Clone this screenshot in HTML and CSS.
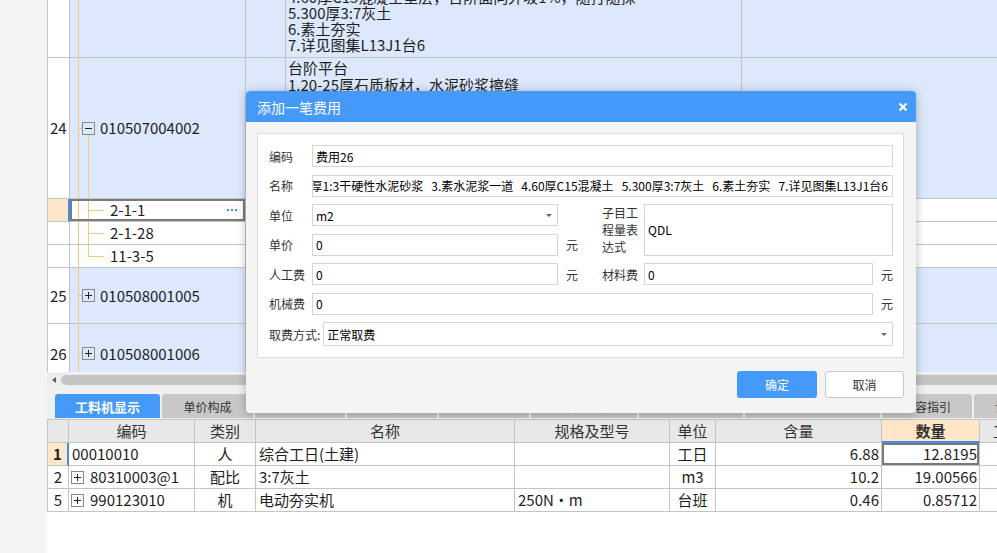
FILE: index.html
```html
<!DOCTYPE html>
<html lang="zh-CN">
<head>
<meta charset="utf-8">
<title>添加一笔费用</title>
<link rel="stylesheet" href="styles.css">
</head>
<body>
<div class="app">
  <div class="side"></div>
  <div class="main">
    <div class="upper">
      <div class="rows">
        <div class="row r-a blue">
          <div class="cell no"></div>
          <div class="cell tree"></div>
          <div class="cell"></div>
          <div class="cell feat">
            <p>3.素水泥浆一道</p>
            <p>4.60厚C15混凝土垫层，台阶面向外坡1%，随打随抹</p>
            <p>5.300厚3:7灰土</p>
            <p>6.素土夯实</p>
            <p>7.详见图集L13J1台6</p>
          </div>
          <div class="cell"></div>
        </div>
        <div class="row r-24 blue">
          <div class="cell no">24</div>
          <div class="cell tree open"><svg class="box" width="13" height="13" viewBox="0 0 13 13"><rect x=".5" y=".5" width="12" height="12" fill="none" stroke="#8a8a8a"/><path d="M3 6.5h7" stroke="#222"/></svg><span class="code">010507004002</span></div>
          <div class="cell"></div>
          <div class="cell feat f24">
            <p>台阶平台</p>
            <p>1.20-25厚石质板材，水泥砂浆擦缝</p>
            <p>2.30厚1:3干硬性水泥砂浆</p>
            <p>3.素水泥浆一道</p>
            <p>4.60厚C15混凝土</p>
            <p>5.300厚3:7灰土</p>
            <p>6.素土夯实</p>
            <p>7.详见图集L13J1台6</p>
          </div>
          <div class="cell"></div>
        </div>
        <div class="row r-s">
          <div class="cell no cur"></div>
          <div class="cell tree child picked"><span class="sub">2-1-1</span><span class="more"><i></i><i></i><i></i></span></div>
          <div class="cell"></div>
          <div class="cell"></div>
          <div class="cell"></div>
        </div>
        <div class="row r-s">
          <div class="cell no"></div>
          <div class="cell tree child"><span class="sub">2-1-28</span></div>
          <div class="cell"></div>
          <div class="cell"></div>
          <div class="cell"></div>
        </div>
        <div class="row r-s">
          <div class="cell no"></div>
          <div class="cell tree child last"><span class="sub">11-3-5</span></div>
          <div class="cell"></div>
          <div class="cell"></div>
          <div class="cell"></div>
        </div>
        <div class="row r-25 blue">
          <div class="cell no">25</div>
          <div class="cell tree closed"><svg class="box" width="13" height="13" viewBox="0 0 13 13"><rect x=".5" y=".5" width="12" height="12" fill="none" stroke="#8a8a8a"/><path d="M3 6.5h7M6.5 3v7" stroke="#222"/></svg><span class="code">010508001005</span></div>
          <div class="cell"></div>
          <div class="cell"></div>
          <div class="cell"></div>
        </div>
        <div class="row r-26 blue">
          <div class="cell no">26</div>
          <div class="cell tree closed"><svg class="box" width="13" height="13" viewBox="0 0 13 13"><rect x=".5" y=".5" width="12" height="12" fill="none" stroke="#8a8a8a"/><path d="M3 6.5h7M6.5 3v7" stroke="#222"/></svg><span class="code">010508001006</span></div>
          <div class="cell"></div>
          <div class="cell"></div>
          <div class="cell"></div>
        </div>
      </div>
    </div>
    <div class="hscroll"><span class="arrow"></span><span class="thumb"></span></div>
    <div class="tabs">
      <span class="tab on w105">工料机显示</span>
      <span class="tab w91">单价构成</span>
      <span class="tab w90">标准换算</span>
      <span class="tab w90">换算信息</span>
      <span class="tab w90">安装费用</span>
      <span class="tab w106">特征及内容</span>
      <span class="tab w104">工程量明细</span>
      <span class="tab w135">反查图形工程量</span>
      <span class="tab w90">内容指引</span>
      <span class="tab w90">说明信息</span>
    </div>
    <div class="lower">
      <div class="rows">
        <div class="row head">
          <div class="cell"></div>
          <div class="cell c">编码</div>
          <div class="cell c">类别</div>
          <div class="cell c">名称</div>
          <div class="cell c">规格及型号</div>
          <div class="cell c">单位</div>
          <div class="cell c">含量</div>
          <div class="cell c qty">数量</div>
          <div class="cell l">工程量</div>
        </div>
        <div class="row">
          <div class="cell no c cur">1</div>
          <div class="cell">00010010</div>
          <div class="cell c">人</div>
          <div class="cell">综合工日(土建)</div>
          <div class="cell"></div>
          <div class="cell c">工日</div>
          <div class="cell r">6.88</div>
          <div class="cell r picked">12.8195</div>
          <div class="cell"></div>
        </div>
        <div class="row">
          <div class="cell no c">2</div>
          <div class="cell"><svg class="box sm" width="13" height="13" viewBox="0 0 13 13"><rect x=".5" y=".5" width="12" height="12" fill="none" stroke="#8a8a8a"/><path d="M3 6.5h7M6.5 3v7" stroke="#222"/></svg>80310003@1</div>
          <div class="cell c">配比</div>
          <div class="cell">3:7灰土</div>
          <div class="cell"></div>
          <div class="cell c">m3</div>
          <div class="cell r">10.2</div>
          <div class="cell r">19.00566</div>
          <div class="cell"></div>
        </div>
        <div class="row">
          <div class="cell no c">5</div>
          <div class="cell"><svg class="box sm" width="13" height="13" viewBox="0 0 13 13"><rect x=".5" y=".5" width="12" height="12" fill="none" stroke="#8a8a8a"/><path d="M3 6.5h7M6.5 3v7" stroke="#222"/></svg>990123010</div>
          <div class="cell c">机</div>
          <div class="cell">电动夯实机</div>
          <div class="cell">250N・m</div>
          <div class="cell c">台班</div>
          <div class="cell r">0.46</div>
          <div class="cell r">0.85712</div>
          <div class="cell"></div>
        </div>
      </div>
    </div>
  </div>
</div>

<div class="dialog">
  <div class="dlg-head">
    <span>添加一笔费用</span>
    <svg class="close" width="10" height="10" viewBox="0 0 10 10"><path d="M1.5 1.5l7 7M8.5 1.5l-7 7" stroke="#fff" stroke-width="2.2"/></svg>
  </div>
  <div class="dlg-body">
    <div class="panel">
      <span class="lb">编码</span>
      <div class="ipt wide">费用26</div>

      <span class="lb">名称</span>
      <div class="ipt wide scrolled"><span>台阶平台 1.20-25厚石质板材，水泥砂浆擦缝   2.30厚1:3干硬性水泥砂浆   3.素水泥浆一道   4.60厚C15混凝土   5.300厚3:7灰土   6.素土夯实   7.详见图集L13J1台6</span></div>

      <span class="lb">单位</span>
      <div class="ipt dd">m2<i class="caret"></i></div>
      <span class="gap"></span>
      <span class="lb multi">子目工程量表达式</span>
      <div class="ipt area">QDL</div>

      <span class="lb">单价</span>
      <div class="ipt">0</div>
      <span class="unit">元</span>

      <span class="lb">人工费</span>
      <div class="ipt">0</div>
      <span class="unit">元</span>
      <span class="lb lb2">材料费</span>
      <div class="ipt">0</div>
      <span class="unit">元</span>

      <span class="lb">机械费</span>
      <div class="ipt mid">0</div>
      <span class="unit">元</span>

      <div class="fee">
        <span class="lb">取费方式:</span>
        <div class="ipt dd tall">正常取费<i class="caret"></i></div>
      </div>
    </div>
    <div class="btns">
      <button class="btn ok">确定</button>
      <button class="btn cancel">取消</button>
    </div>
  </div>
</div>
</body>
</html>
```

FILE: styles.css
```css
* { box-sizing: border-box; margin: 0; padding: 0; }
html, body { width: 997px; height: 553px; overflow: hidden; }
body {
  font-family: "Noto Sans CJK SC", "Noto Sans", sans-serif;
  background: #f4f4f4;
  color: #1e1e1e;
  position: relative;
}
.app { display: flex; height: 553px; }
.side { width: 47px; flex: none; background: #f4f4f4; }
.main {
  flex: 1; min-width: 0; background: #fff;
  display: flex; flex-direction: column; overflow: hidden;
}

/* ---------- grids ---------- */
.rows { border-left: 1px solid #c4c4c4; }
.row { display: grid; height: 23px; }
.cell {
  border-right: 1px solid #c4c4c4;
  border-bottom: 1px solid #c4c4c4;
  font-size: 15px;
  line-height: 22px;
  white-space: nowrap;
  overflow: hidden;
  display: flex;
  align-items: center;
  padding: 0 3px;
  background: #fff;
}

.upper { height: 372px; overflow: hidden; flex: none; }
.upper .rows { margin-top: -29px; }
.upper .row { grid-template-columns: 22px 176px 40px 456px 400px; }
.upper .r-a { height: 87px; }
.upper .r-24 { height: 141px; }
.upper .r-s { height: 23px; }
.upper .r-25 { height: 56px; }
.upper .r-26 { height: 60px; }
.blue > .cell { background-color: #dce8fc; }
.blue > .cell.no { background-color: #fff; }
.upper .no { padding-left: 2px; }
.no.cur { background: #fde7c8; border-right: 2px solid #3d8ef0; }

.feat { display: block; padding: 2px 2px 0; line-height: 16px; }
.feat.f24 { line-height: 17px; padding-top: 1px; }

/* tree */
.tree {
  padding-left: 12px;
  background-image: linear-gradient(#f9c77f, #f9c77f);
  background-repeat: no-repeat;
  background-size: 1px 100%;
  background-position: 8px 0;
}
.tree.open {
  background-image: linear-gradient(#f9c77f, #f9c77f), linear-gradient(#f9c77f, #f9c77f), linear-gradient(#f9c77f, #f9c77f);
  background-size: 1px 100%, 4px 1px, 1px calc(50% - 7px);
  background-position: 8px 0, 8px 50%, 18px 100%;
}
.tree.closed {
  background-image: linear-gradient(#f9c77f, #f9c77f), linear-gradient(#f9c77f, #f9c77f);
  background-size: 1px 100%, 4px 1px;
  background-position: 8px 0, 8px 50%;
}
.tree.child {
  padding-left: 40px;
  padding-right: 8px;
  justify-content: space-between;
  background-image: linear-gradient(#f9c77f, #f9c77f), linear-gradient(#f9c77f, #f9c77f), linear-gradient(#f9c77f, #f9c77f);
  background-size: 1px 100%, 1px 100%, 16px 1px;
  background-position: 8px 0, 18px 0, 18px 50%;
}
.tree.child.last { background-size: 1px 100%, 1px 50%, 16px 1px; }
.tree.picked { box-shadow: inset 0 0 0 2px #7b7b7b, 0 -1px 0 #7b7b7b; }
.box { flex: none; display: block; }
.code { margin-left: 5px; }
.more { display: flex; gap: 2px; }
.more i { width: 2px; height: 2px; background: #3a8de6; display: block; }

/* scrollbar */
.hscroll {
  height: 14px; flex: none;
  display: flex; align-items: center;
  background: #ececec;
  border-top: 1px solid #f6f6f6;
  padding-left: 5px;
}
.arrow {
  width: 0; height: 0;
  border-right: 4px solid #5c5c5c;
  border-top: 3px solid transparent;
  border-bottom: 3px solid transparent;
  margin-right: 5px;
}
.thumb { flex: 1; height: 10px; background: #c4c4c4; border-radius: 5px 0 0 5px; }

/* tabs */
.tabs {
  height: 33px; flex: none;
  background: #f0f0f0;
  display: flex; gap: 2px;
  padding: 8px 0 1px 8px;
  overflow: hidden;
}
.tab {
  flex: none;
  height: 24px;
  background: #c8c8c8;
  border-radius: 3px 3px 0 0;
  font-size: 12px;
  color: #333;
  display: flex; align-items: center; justify-content: center;
}
.tab.on { background: #4599f8; color: #fff; font-weight: 700; font-size: 13px; }
.w105 { width: 105px; } .w91 { width: 91px; } .w90 { width: 90px; }
.w106 { width: 106px; } .w104 { width: 104px; } .w135 { width: 135px; }

/* lower grid */
.lower { flex: 1; background: #fff; }
.lower .rows { border-top: 1px solid #c4c4c4; }
.lower .row { grid-template-columns: 21px 126px 61px 259px 155px 46px 166px 98px 100px; }
.head .cell { background: #e8e8e8; color: #333; }
.c { justify-content: center; }
.r { justify-content: flex-end; padding-right: 2px; }
.l { padding-left: 13px; }
.lower .no { padding: 0; }
.lower .no.cur { font-weight: 700; }
.head .qty { background: #fde7c8; font-weight: 700; border-bottom: 2px solid #3d8ef0; }
.cell.picked { box-shadow: inset 0 0 0 2px #7b7b7b; }
.box.sm { margin: 0 6px 0 -1px; }

/* ---------- dialog ---------- */
.dialog {
  position: absolute;
  left: 246px; top: 91px;
  width: 670px; height: 322px;
  background: #f4f4f4;
  border-radius: 4px;
  box-shadow: 0 1px 10px rgba(0, 0, 0, 0.28);
  font-size: 12px;
  color: #333;
}
.dlg-head {
  height: 31px;
  background: #4599f8;
  border-radius: 4px 4px 0 0;
  color: #fff;
  font-size: 14px;
  display: flex; align-items: center; justify-content: space-between;
  padding: 0 8px 0 11px;
}
.close { display: block; }
.dlg-body { padding: 11px 12px 0 11px; }
.panel {
  height: 225px;
  background: #fff;
  border: 1px solid #dcdcdc;
  padding: 11px 10px 11px 11px;
  display: grid;
  grid-template-columns: 43px 246px 42px 44px 229px 20px;
  grid-template-rows: 22px 22px 22px 22px 22px 22px 24px;
  row-gap: 7.5px;
}
.lb { align-self: center; white-space: nowrap; line-height: 17px; }
.lb2 { padding-left: 2px; }
.multi {
  grid-column: 4; grid-row: 3 / span 2;
  align-self: start; white-space: normal;
  padding-left: 2px; line-height: 17px;
}
.unit { align-self: center; padding-left: 8px; }
.ipt {
  border: 1px solid #d5d5d5;
  background: #fff;
  color: #000;
  padding: 0 3px;
  display: flex; align-items: center;
  white-space: nowrap; overflow: hidden;
}
.wide { grid-column: 2 / span 5; }
.mid { grid-column: 2 / span 4; }
.area { grid-column: 5 / span 2; grid-row: 3 / span 2; }
.scrolled { justify-content: flex-end; padding-right: 4px; white-space: pre; }
.dd { justify-content: space-between; padding-right: 5px; }
.caret {
  width: 0; height: 0;
  border-top: 3px solid #666;
  border-left: 3px solid transparent;
  border-right: 3px solid transparent;
}
.fee { grid-column: 1 / span 6; display: flex; gap: 3px; }
.fee .ipt { flex: 1; }
.tall { height: 24px; }
.btns { display: flex; justify-content: flex-end; gap: 8px; margin-top: 13px; }
.btn {
  height: 27px;
  font-family: inherit;
  font-size: 12px;
  border-radius: 3px;
}
.ok { width: 80px; background: #4599f8; color: #fff; border: none; }
.cancel { width: 79px; background: #fff; color: #333; border: 1px solid #c9c9c9; }
```
